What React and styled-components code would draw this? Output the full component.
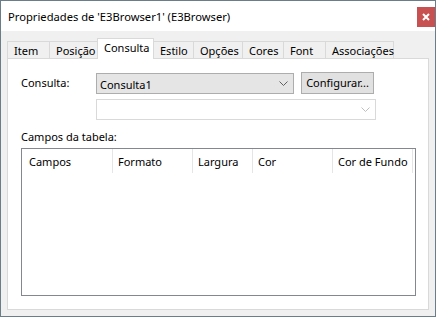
import React from 'react'
import styled, { createGlobalStyle } from 'styled-components'

const GlobalStyle = createGlobalStyle`
    html, body {
        margin: 0;
        padding: 0;
        background: #fff;
    }
    * {
        box-sizing: border-box;
    }
`

const tabs = [
    { label: 'Item', width: 43 },
    { label: 'Posição', width: 49 },
    { label: 'Consulta', width: 57, active: true },
    { label: 'Estilo', width: 41 },
    { label: 'Opções', width: 50 },
    { label: 'Cores', width: 42 },
    { label: 'Font', width: 43 },
    { label: 'Associações', width: 69 },
]

const columns = [
    { label: 'Campos', width: 91 },
    { label: 'Formato', width: 80 },
    { label: 'Largura', width: 60 },
    { label: 'Cor', width: 80 },
    { label: 'Cor de Fundo', width: 80 },
]

const Chevron = ({ color }) => (
    <svg width="9" height="5" viewBox="0 0 9 5">
        <path d="M0.5 0.5 L4.5 4.5 L8.5 0.5" fill="none" stroke={color} strokeWidth="1" />
    </svg>
)

const App = () => {
    return (
        <>
            <GlobalStyle />
            <Window>
                <TitleBar>
                    <Title>Propriedades de 'E3Browser1' (E3Browser)</Title>
                    <CloseButton>
                        <svg width="8" height="8" viewBox="0 0 8 8">
                            <path d="M1 1 L7 7 M7 1 L1 7" stroke="#fff" strokeWidth="2" />
                        </svg>
                    </CloseButton>
                </TitleBar>
                <Body>
                    <TabStrip>
                        {tabs.map((t) => (
                            <Tab key={t.label} $width={t.width} $active={t.active}>
                                {t.label}
                            </Tab>
                        ))}
                    </TabStrip>
                    <Panel>
                        <Row>
                            <FieldLabel>Consulta:</FieldLabel>
                            <Combo $width={198}>
                                <span>Consulta1</span>
                                <Chevron color="#606060" />
                            </Combo>
                            <Button>Configurar...</Button>
                        </Row>
                        <SubRow>
                            <Combo $width={280} $disabled>
                                <span />
                                <Chevron color="#bfbfbf" />
                            </Combo>
                        </SubRow>
                        <SectionLabel>Campos da tabela:</SectionLabel>
                        <ListView>
                            <HeaderRow>
                                {columns.map((c) => (
                                    <HeaderCell key={c.label} $width={c.width}>
                                        {c.label}
                                    </HeaderCell>
                                ))}
                            </HeaderRow>
                        </ListView>
                    </Panel>
                </Body>
            </Window>
        </>
    )
}

export default App

const Window = styled.div`
    width: 436px;
    height: 317px;
    border: 1px solid #6b7d88;
    display: flex;
    flex-direction: column;
    font-family: 'Noto Sans', 'Open Sans', sans-serif;
    font-size: 11px;
    color: #000;
`
const TitleBar = styled.div`
    height: 30px;
    background: #fff;
    display: flex;
    align-items: flex-start;
    justify-content: space-between;
`
const Title = styled.div`
    padding: 8px 0 0 7px;
    line-height: 16px;
    font-size: 11.2px;
`
const CloseButton = styled.div`
    width: 18px;
    height: 20px;
    margin: 6px 0 0 0;
    background: #c75050;
    display: flex;
    align-items: center;
    justify-content: center;
`
const Body = styled.div`
    flex: 1;
    background: #f0f0f0;
    padding: 7px 6px 6px 6px;
    display: flex;
    flex-direction: column;
`
const TabStrip = styled.div`
    height: 20px;
    display: flex;
    align-items: flex-end;
    position: relative;
    z-index: 1;
`
const Tab = styled.div`
    width: ${(p) => p.$width}px;
    height: ${(p) => (p.$active ? 21 : 17)}px;
    margin: ${(p) => (p.$active ? '0 0 -1px -1px' : '0 0 0 -1px')};
    padding-left: 6px;
    padding-bottom: ${(p) => (p.$active ? 3 : 0)}px;
    border: 1px solid #d9d9d9;
    border-bottom: none;
    background: ${(p) => (p.$active ? '#fff' : '#f0f0f0')};
    display: flex;
    align-items: center;
    white-space: nowrap;
    position: relative;
    z-index: ${(p) => (p.$active ? 2 : 1)};
    &:first-child {
        margin-left: 0;
    }
`
const Panel = styled.div`
    flex: 1;
    background: #fff;
    border: 1px solid #d9d9d9;
    padding: 14px 13px 0 13px;
`
const Row = styled.div`
    display: flex;
    align-items: center;
`
const FieldLabel = styled.div`
    width: 75px;
    margin-top: -2px;
`
const Combo = styled.div`
    width: ${(p) => p.$width}px;
    height: 21px;
    border: 1px solid ${(p) => (p.$disabled ? '#d9d9d9' : '#adadad')};
    background: ${(p) => (p.$disabled ? '#fff' : '#e5e5e5')};
    display: flex;
    align-items: center;
    justify-content: space-between;
    padding: 0 5px 0 3px;
    span {
        padding-top: 1px;
    }
`
const Button = styled.div`
    width: 73px;
    height: 22px;
    margin-left: 7px;
    margin-top: -1px;
    border: 1px solid #adadad;
    background: #e1e1e1;
    display: flex;
    align-items: center;
    justify-content: center;
    padding-bottom: 1px;
`
const SubRow = styled.div`
    display: flex;
    padding-left: 75px;
    margin-top: 5px;
`
const SectionLabel = styled.div`
    margin-top: 9px;
    height: 16px;
    line-height: 16px;
`
const ListView = styled.div`
    width: 395px;
    height: 148px;
    margin-top: 3px;
    border: 1px solid #828790;
`
const HeaderRow = styled.div`
    display: flex;
    height: 24px;
`
const HeaderCell = styled.div`
    width: ${(p) => p.$width}px;
    height: 24px;
    border-right: 1px solid #e5e5e5;
    padding-left: 5px;
    display: flex;
    align-items: center;
    white-space: nowrap;
    &:first-child {
        padding-left: 7px;
    }
`
